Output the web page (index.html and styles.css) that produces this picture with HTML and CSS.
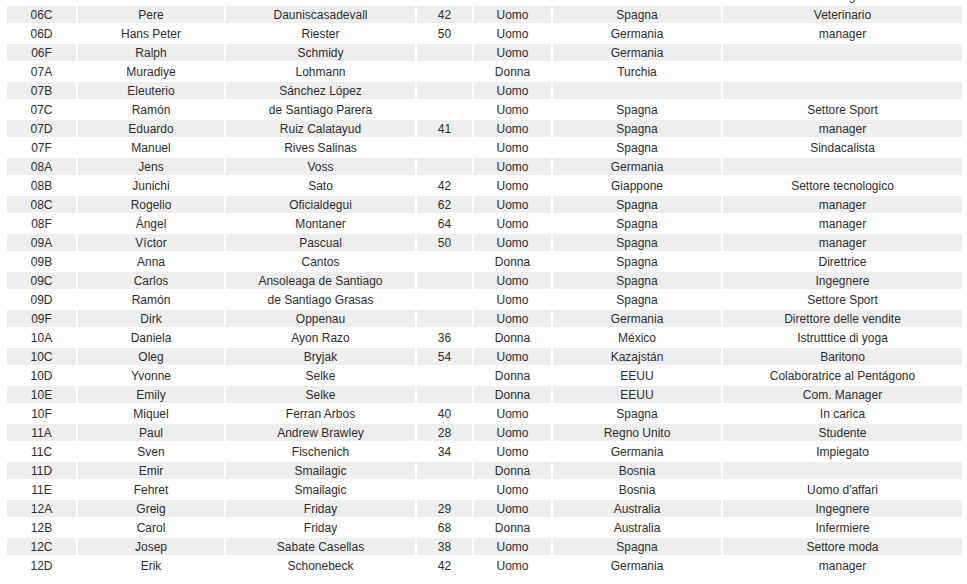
FILE: index.html
```html
<!DOCTYPE html>
<html lang="it">
<head>
<meta charset="utf-8">
<title>Elenco</title>
<link rel="stylesheet" href="styles.css">
</head>
<body>
<table class="people">
<colgroup>
<col class="c-seat"><col class="c-first"><col class="c-last"><col class="c-age"><col class="c-sex"><col class="c-country"><col class="c-job">
</colgroup>
<tbody>
<tr><td></td><td></td><td></td><td></td><td></td><td></td><td>manager</td></tr>
<tr><td>06C</td><td>Pere</td><td>Dauniscasadevall</td><td>42</td><td>Uomo</td><td>Spagna</td><td>Veterinario</td></tr>
<tr><td>06D</td><td>Hans Peter</td><td>Riester</td><td>50</td><td>Uomo</td><td>Germania</td><td>manager</td></tr>
<tr><td>06F</td><td>Ralph</td><td>Schmidy</td><td></td><td>Uomo</td><td>Germania</td><td></td></tr>
<tr><td>07A</td><td>Muradiye</td><td>Lohmann</td><td></td><td>Donna</td><td>Turchia</td><td></td></tr>
<tr><td>07B</td><td>Eleuterio</td><td>Sánchez López</td><td></td><td>Uomo</td><td></td><td></td></tr>
<tr><td>07C</td><td>Ramón</td><td>de Santiago Parera</td><td></td><td>Uomo</td><td>Spagna</td><td>Settore Sport</td></tr>
<tr><td>07D</td><td>Eduardo</td><td>Ruiz Calatayud</td><td>41</td><td>Uomo</td><td>Spagna</td><td>manager</td></tr>
<tr><td>07F</td><td>Manuel</td><td>Rives Salinas</td><td></td><td>Uomo</td><td>Spagna</td><td>Sindacalista</td></tr>
<tr><td>08A</td><td>Jens</td><td>Voss</td><td></td><td>Uomo</td><td>Germania</td><td></td></tr>
<tr><td>08B</td><td>Junichi</td><td>Sato</td><td>42</td><td>Uomo</td><td>Giappone</td><td>Settore tecnologico</td></tr>
<tr><td>08C</td><td>Rogelio</td><td>Oficialdegui</td><td>62</td><td>Uomo</td><td>Spagna</td><td>manager</td></tr>
<tr><td>08F</td><td>Ángel</td><td>Montaner</td><td>64</td><td>Uomo</td><td>Spagna</td><td>manager</td></tr>
<tr><td>09A</td><td>Víctor</td><td>Pascual</td><td>50</td><td>Uomo</td><td>Spagna</td><td>manager</td></tr>
<tr><td>09B</td><td>Anna</td><td>Cantos</td><td></td><td>Donna</td><td>Spagna</td><td>Direttrice</td></tr>
<tr><td>09C</td><td>Carlos</td><td>Ansoleaga de Santiago</td><td></td><td>Uomo</td><td>Spagna</td><td>Ingegnere</td></tr>
<tr><td>09D</td><td>Ramón</td><td>de Santiago Grasas</td><td></td><td>Uomo</td><td>Spagna</td><td>Settore Sport</td></tr>
<tr><td>09F</td><td>Dirk</td><td>Oppenau</td><td></td><td>Uomo</td><td>Germania</td><td>Direttore delle vendite</td></tr>
<tr><td>10A</td><td>Daniela</td><td>Ayon Razo</td><td>36</td><td>Donna</td><td>México</td><td>Istrutttice di yoga</td></tr>
<tr><td>10C</td><td>Oleg</td><td>Bryjak</td><td>54</td><td>Uomo</td><td>Kazajstán</td><td>Baritono</td></tr>
<tr><td>10D</td><td>Yvonne</td><td>Selke</td><td></td><td>Donna</td><td>EEUU</td><td>Colaboratrice al Pentágono</td></tr>
<tr><td>10E</td><td>Emily</td><td>Selke</td><td></td><td>Donna</td><td>EEUU</td><td>Com. Manager</td></tr>
<tr><td>10F</td><td>Miquel</td><td>Ferran Arbos</td><td>40</td><td>Uomo</td><td>Spagna</td><td>In carica</td></tr>
<tr><td>11A</td><td>Paul</td><td>Andrew Brawley</td><td>28</td><td>Uomo</td><td>Regno Unito</td><td>Studente</td></tr>
<tr><td>11C</td><td>Sven</td><td>Fischenich</td><td>34</td><td>Uomo</td><td>Germania</td><td>Impiegato</td></tr>
<tr><td>11D</td><td>Emir</td><td>Smailagic</td><td></td><td>Donna</td><td>Bosnia</td><td></td></tr>
<tr><td>11E</td><td>Fehret</td><td>Smailagic</td><td></td><td>Uomo</td><td>Bosnia</td><td>Uomo d'affari</td></tr>
<tr><td>12A</td><td>Greig</td><td>Friday</td><td>29</td><td>Uomo</td><td>Australia</td><td>Ingegnere</td></tr>
<tr><td>12B</td><td>Carol</td><td>Friday</td><td>68</td><td>Donna</td><td>Australia</td><td>Infermiere</td></tr>
<tr><td>12C</td><td>Josep</td><td>Sabate Casellas</td><td>38</td><td>Uomo</td><td>Spagna</td><td>Settore moda</td></tr>
<tr><td>12D</td><td>Erik</td><td>Schonebeck</td><td>42</td><td>Uomo</td><td>Germania</td><td>manager</td></tr>
</tbody>
</table>
</body>
</html>
```
FILE: styles.css
```css
html, body {
  margin: 0;
  padding: 0;
  background: #ffffff;
}
body {
  font-family: "Liberation Sans", Arial, sans-serif;
  font-size: 12px;
  color: #2e2e2e;
  overflow: hidden;
}
.people {
  table-layout: fixed;
  border-collapse: separate;
  border-spacing: 2px;
  margin: -15px 0 0 5px;
  width: 959px;
}
.people td {
  padding: 1px 0 0;
  height: 16px;
  line-height: 16px;
  text-align: center;
  white-space: nowrap;
  overflow: hidden;
}
.people tr:nth-child(even) td {
  background: #eeeeee;
}
.c-seat { width: 69px; }
.c-first { width: 146px; }
.c-last { width: 189px; }
.c-age { width: 55px; }
.c-sex { width: 77px; }
.c-country { width: 168px; }
.c-job { width: 239px; }
```
